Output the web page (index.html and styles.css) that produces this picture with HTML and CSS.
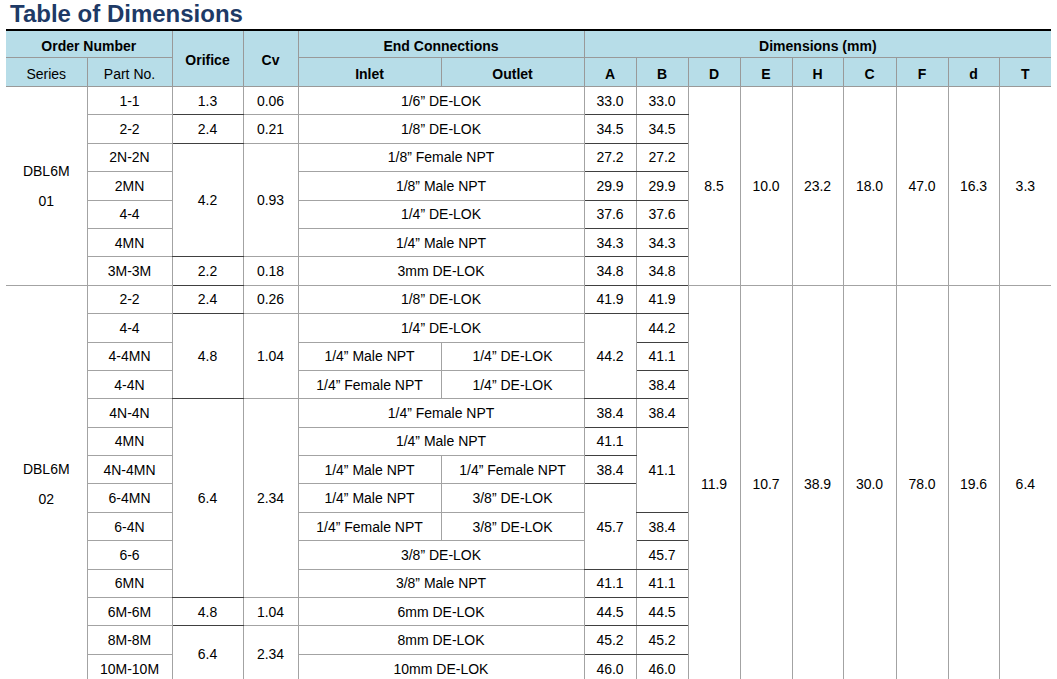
FILE: index.html
```html
<!DOCTYPE html>
<html lang="en">
<head>
<meta charset="utf-8">
<title>Table of Dimensions</title>
<link rel="stylesheet" href="styles.css">
</head>
<body>
<div class="page">
  <h1 class="title">Table of Dimensions</h1>
  <table class="dims">
    <colgroup>
      <col style="width:81px"><col style="width:85px"><col style="width:71px"><col style="width:55px">
      <col style="width:143px"><col style="width:143px">
      <col style="width:52px"><col style="width:52px"><col style="width:52px"><col style="width:52px">
      <col style="width:51px"><col style="width:53px"><col style="width:52px"><col style="width:51px"><col style="width:52px">
    </colgroup>
    <thead>
      <tr class="h1">
        <th colspan="2" class="first">Order Number</th>
        <th rowspan="2">Orifice</th>
        <th rowspan="2">Cv</th>
        <th colspan="2">End Connections</th>
        <th colspan="9" class="last">Dimensions (mm)</th>
      </tr>
      <tr class="h2">
        <th class="first reg">Series</th>
        <th class="reg">Part No.</th>
        <th>Inlet</th>
        <th>Outlet</th>
        <th>A</th><th>B</th><th>D</th><th>E</th><th>H</th><th>C</th><th>F</th><th>d</th><th class="last">T</th>
      </tr>
    </thead>
    <tbody>
      <tr>
        <td rowspan="7" class="first series">DBL6M<br>01</td>
        <td>1-1</td><td class="dk">1.3</td><td>0.06</td>
        <td colspan="2">1/6” DE-LOK</td>
        <td class="dk">33.0</td><td class="dk">33.0</td>
        <td rowspan="7">8.5</td><td rowspan="7">10.0</td><td rowspan="7">23.2</td><td rowspan="7">18.0</td><td rowspan="7">47.0</td><td rowspan="7">16.3</td><td rowspan="7" class="last">3.3</td>
      </tr>
      <tr>
        <td>2-2</td><td class="dk">2.4</td><td>0.21</td>
        <td colspan="2">1/8” DE-LOK</td>
        <td class="dk">34.5</td><td class="dk">34.5</td>
      </tr>
      <tr>
        <td>2N-2N</td><td rowspan="4" class="dk">4.2</td><td rowspan="4">0.93</td>
        <td colspan="2">1/8” Female NPT</td>
        <td class="dk">27.2</td><td class="dk">27.2</td>
      </tr>
      <tr>
        <td>2MN</td>
        <td colspan="2">1/8” Male NPT</td>
        <td class="dk">29.9</td><td class="dk">29.9</td>
      </tr>
      <tr>
        <td>4-4</td>
        <td colspan="2">1/4” DE-LOK</td>
        <td class="dk">37.6</td><td class="dk">37.6</td>
      </tr>
      <tr>
        <td>4MN</td>
        <td colspan="2">1/4” Male NPT</td>
        <td class="dk">34.3</td><td class="dk">34.3</td>
      </tr>
      <tr>
        <td>3M-3M</td><td class="dk">2.2</td><td>0.18</td>
        <td colspan="2">3mm DE-LOK</td>
        <td class="dk">34.8</td><td class="dk">34.8</td>
      </tr>

      <tr>
        <td rowspan="14" class="first series">DBL6M<br>02</td>
        <td>2-2</td><td class="dk">2.4</td><td>0.26</td>
        <td colspan="2">1/8” DE-LOK</td>
        <td class="dk">41.9</td><td class="dk">41.9</td>
        <td rowspan="14">11.9</td><td rowspan="14">10.7</td><td rowspan="14">38.9</td><td rowspan="14">30.0</td><td rowspan="14">78.0</td><td rowspan="14">19.6</td><td rowspan="14" class="last">6.4</td>
      </tr>
      <tr>
        <td>4-4</td><td rowspan="3" class="dk">4.8</td><td rowspan="3">1.04</td>
        <td colspan="2">1/4” DE-LOK</td>
        <td rowspan="3" class="dk">44.2</td><td class="dk">44.2</td>
      </tr>
      <tr>
        <td>4-4MN</td>
        <td>1/4” Male NPT</td><td>1/4” DE-LOK</td>
        <td class="dk">41.1</td>
      </tr>
      <tr>
        <td>4-4N</td>
        <td>1/4” Female NPT</td><td>1/4” DE-LOK</td>
        <td class="dk">38.4</td>
      </tr>
      <tr>
        <td>4N-4N</td><td rowspan="7" class="dk">6.4</td><td rowspan="7">2.34</td>
        <td colspan="2">1/4” Female NPT</td>
        <td class="dk">38.4</td><td class="dk">38.4</td>
      </tr>
      <tr>
        <td>4MN</td>
        <td colspan="2">1/4” Male NPT</td>
        <td class="dk">41.1</td><td rowspan="3" class="dk">41.1</td>
      </tr>
      <tr>
        <td>4N-4MN</td>
        <td>1/4” Male NPT</td><td>1/4” Female NPT</td>
        <td class="dk">38.4</td>
      </tr>
      <tr>
        <td>6-4MN</td>
        <td>1/4” Male NPT</td><td>3/8” DE-LOK</td>
        <td rowspan="3" class="dk">45.7</td>
      </tr>
      <tr>
        <td>6-4N</td>
        <td>1/4” Female NPT</td><td>3/8” DE-LOK</td>
        <td class="dk">38.4</td>
      </tr>
      <tr>
        <td>6-6</td>
        <td colspan="2">3/8” DE-LOK</td>
        <td class="dk">45.7</td>
      </tr>
      <tr>
        <td>6MN</td>
        <td colspan="2">3/8” Male NPT</td>
        <td class="dk">41.1</td><td class="dk">41.1</td>
      </tr>
      <tr>
        <td>6M-6M</td><td class="dk">4.8</td><td>1.04</td>
        <td colspan="2">6mm DE-LOK</td>
        <td class="dk">44.5</td><td class="dk">44.5</td>
      </tr>
      <tr>
        <td>8M-8M</td><td rowspan="2" class="dk">6.4</td><td rowspan="2">2.34</td>
        <td colspan="2">8mm DE-LOK</td>
        <td class="dk">45.2</td><td class="dk">45.2</td>
      </tr>
      <tr>
        <td>10M-10M</td>
        <td colspan="2">10mm DE-LOK</td>
        <td class="dk">46.0</td><td class="dk">46.0</td>
      </tr>
    </tbody>
  </table>
</div>
</body>
</html>
```

FILE: styles.css
```css
html, body {
  margin: 0;
  padding: 0;
  background: #ffffff;
}

body {
  font-family: "Liberation Sans", Arial, sans-serif;
  color: #000000;
}

.page {
  padding: 0 6px;
}

.title {
  margin: 0;
  padding-left: 4px;
  height: 29px;
  line-height: 28px;
  font-size: 24px;
  font-weight: bold;
  color: #1e3a66;
}

.dims {
  border-collapse: collapse;
  table-layout: fixed;
  width: 1045px;
  border-top: 2px solid #000000;
  font-size: 14px;
}

.dims th,
.dims td {
  border: 1px solid #a3a3a3;
  padding: 0;
  text-align: center;
  vertical-align: middle;
  white-space: nowrap;
}

.dims thead th {
  background: #b7dde8;
  font-weight: bold;
  border-color: #999999;
  padding-top: 3px;
}

.dims thead .reg {
  font-weight: normal;
}

.dims tr.h1 th {
  height: 23px;
}

.dims tr.h2 th {
  height: 25px;
}

.dims tbody td {
  height: 27.4px;
}

.dims .first {
  border-left: none;
}

.dims .last {
  border-right: none;
}

.dims tbody .dk {
  border-top-color: #404040;
  border-bottom-color: #404040;
}

.dims .series {
  line-height: 30px;
}
```
